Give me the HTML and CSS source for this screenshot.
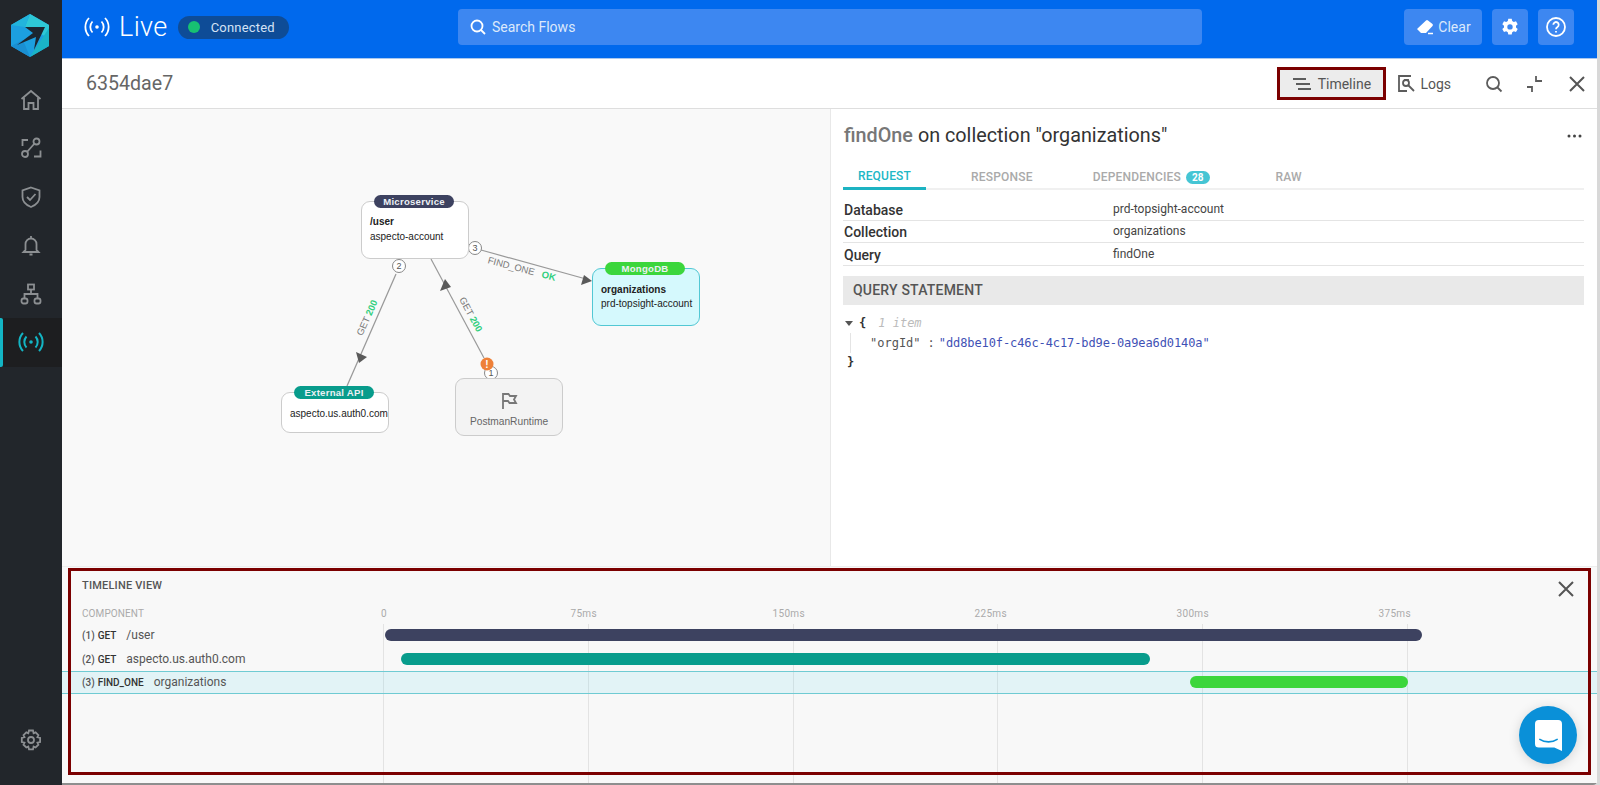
FILE: index.html
```html
<!DOCTYPE html>
<html lang="en">
<head>
<meta charset="utf-8">
<title>Live</title>
<link rel="stylesheet" href="styles.css">
</head>
<body>
<div class="app">
  <aside class="sidebar">
    <div class="logo">
      <svg width="40" height="44" viewBox="0 0 40 44">
        <polygon points="19,0 38,11 38,32 19,43 0,32 0,11" fill="#1c9fe0"/>
        <polygon points="19,0 38,11 38,24 14,13" fill="#2ec8d6"/>
        <polygon points="0,11 19,0 14,13" fill="#22b4dc"/>
        <polygon points="19,43 38,32 38,14 22,38" fill="#1ab4c6"/>
        <polygon points="0,32 12,26 19,43" fill="#1a8fd2"/>
        <polygon points="34,13 14,13 22,19 6,31 25,23 23,36" fill="#1c2630"/>
      </svg>
    </div>
    <nav class="nav">
      <a class="nav-item"><svg width="22" height="22" viewBox="0 0 22 22" class="ico"><path d="M1.500 10 11 2l9.500 8"/><path d="M4 8.500V20h4.500v-6h5v6H18V8.500"/></svg></a>
      <a class="nav-item"><svg width="22" height="22" viewBox="0 0 22 22" class="ico"><circle cx="16.500" cy="4.500" r="3"/><circle cx="5" cy="17" r="3"/><path d="M7 15 14.500 6.500"/><path d="M8 3H2.500v6M14 19.500h6.500v-6"/></svg></a>
      <a class="nav-item"><svg width="22" height="22" viewBox="0 0 22 22" class="ico"><path d="M11 1.500 19.500 4.500V11c0 5-3.500 8-8.500 10C6 19 2.500 16 2.500 11V4.500Z"/><path d="m7 11 3 3 5.500-6"/></svg></a>
      <a class="nav-item"><svg width="22" height="22" viewBox="0 0 22 22" class="ico"><path d="M11 2v2M5.500 16V10a5.500 5.500 0 0 1 11 0v6l2 2h-15ZM9.500 20.500h3"/></svg></a>
      <a class="nav-item"><svg width="22" height="22" viewBox="0 0 22 22" class="ico"><rect x="8" y="1.500" width="6" height="5"/><rect x="1.500" y="15.500" width="6" height="5" rx="2"/><rect x="14.500" y="15.500" width="6" height="5" rx="2"/><path d="M11 6.500V11M4.500 15.500V11h13v4.500"/></svg></a>
      <a class="nav-item active"><svg width="26" height="22" viewBox="0 0 26 22" class="ico-live"><circle cx="13" cy="11" r="1.800" class="dot"/><path d="M8.500 5.500a8 8 0 0 0 0 11M17.500 5.500a8 8 0 0 1 0 11"/><path d="M5 2a13 13 0 0 0 0 18M21 2a13 13 0 0 1 0 18"/></svg></a>
    </nav>
    <a class="nav-item nav-bottom"><svg width="22" height="22" viewBox="0 0 22 22" class="ico"><circle cx="11" cy="11" r="3"/><path d="M9 1.500h4l.6 2.800 2-.9 2.800 2.800-1 2 2.700.8v4l-2.700.7 1 2-2.800 2.800-2-1-.6 2.900H9l-.7-2.900-2 1-2.800-2.800 1-2-2.700-.7v-4l2.700-.8-1-2 2.800-2.800 2 .9Z"/></svg></a>
  </aside>

  <main class="main">
    <header class="topbar">
      <div class="brand">
        <svg width="26" height="22" viewBox="0 0 26 22" class="ico-white"><circle cx="13" cy="11" r="1.800" class="dot-white"/><path d="M8.500 5.500a8 8 0 0 0 0 11M17.500 5.500a8 8 0 0 1 0 11"/><path d="M5 2a13 13 0 0 0 0 18M21 2a13 13 0 0 1 0 18"/></svg>
        <span class="brand-title">Live</span>
        <span class="status"><i class="status-dot"></i>Connected</span>
      </div>
      <div class="search">
        <svg width="16" height="16" viewBox="0 0 16 16" class="ico-white"><circle cx="7" cy="7" r="5.500"/><path d="m11 11 4 4"/></svg>
        <span>Search Flows</span>
      </div>
      <div class="top-actions">
        <button class="top-btn top-btn-text">
          <svg width="20" height="20" viewBox="0 0 20 20"><path d="M2 12 11 3.500a1.500 1.500 0 0 1 2 0l4.500 3.500a1.500 1.500 0 0 1 0 2l-6.500 7H6Z" fill="#fff"/><path d="M13 16.500h5" stroke="#fff" stroke-width="1.500"/></svg>
          Clear
        </button>
        <button class="top-btn"><svg width="18" height="18" viewBox="0 0 18 18"><path fill="#fff" fill-rule="evenodd" d="M7.300.8h3.400l.5 2.200 1.600.9 2.200-.7 1.700 3-1.700 1.500v1.800l1.700 1.500-1.700 3-2.200-.7-1.600.9-.5 2.200H7.300l-.5-2.200-1.600-.9-2.200.7-1.700-3 1.700-1.500V7.700L1.300 6.200l1.700-3 2.200.7 1.600-.9ZM9 6.200a2.600 2.600 0 1 0 0 5.400 2.600 2.600 0 0 0 0-5.400Z"/></svg></button>
        <button class="top-btn"><svg width="20" height="20" viewBox="0 0 20 20" class="ico-white"><circle cx="10" cy="10" r="9"/><path d="M7.300 7.700a2.700 2.700 0 1 1 4.200 2.300c-1 .6-1.500 1.100-1.500 2.200"/><path d="M10 14v1.500"/></svg></button>
      </div>
    </header>

    <div class="subbar">
      <h1 class="flow-id">6354dae7</h1>
      <div class="sub-actions">
        <button class="view-btn selected">
          <svg width="18" height="12" viewBox="0 0 18 12" class="ico-dark"><path d="M0 1h13M3 6h14M5 11h13"/></svg>
          Timeline
        </button>
        <button class="view-btn">
          <svg width="17" height="17" viewBox="0 0 17 17" class="ico-dark"><path d="M13 1H1v15h8"/><path d="M6 5h5"/><circle cx="8" cy="8" r="3"/><path d="m10 10 6 6"/></svg>
          Logs
        </button>
        <svg width="18" height="18" viewBox="0 0 18 18" class="ico-dark icon-search"><circle cx="8" cy="8" r="6"/><path d="m12.500 12.500 4 4"/></svg>
        <svg width="18" height="18" viewBox="0 0 18 18" class="ico-dark icon-collapse"><path d="M10 1v5h6M1 12h5v5"/></svg>
        <svg width="16" height="16" viewBox="0 0 16 16" class="ico-close"><path d="m1 1 14 14M15 1 1 15"/></svg>
      </div>
    </div>

    <section class="detail">
      <div class="canvas">
        <svg class="edges" width="768" height="457" viewBox="62 109 768 457">
          <g class="edge">
            <path d="M396 274 347 386"/>
            <path d="M484 358 431 259"/>
            <path d="M481 250 586 279"/>
          </g>
          <g class="arrow">
            <polygon points="359,363 356,352 367,357"/>
            <polygon points="445,279 440,291 451,287"/>
            <polygon points="592,281 581,285 584,275"/>
          </g>
          <g class="edge-num">
            <circle cx="475" cy="248" r="6.500"/>
            <circle cx="399" cy="266" r="6.500"/>
            <circle cx="491" cy="373" r="6.500"/>
          </g>
          <g class="edge-num-text">
            <text x="475" y="251">3</text>
            <text x="399" y="269">2</text>
            <text x="491" y="376">1</text>
          </g>
          <circle cx="487" cy="364" r="6.500" class="warn"/>
          <text x="487" y="368" class="warn-text">!</text>
          <text class="edge-label" transform="translate(370 319) rotate(-66)">GET <tspan class="ok">200</tspan></text>
          <text class="edge-label" transform="translate(468 316) rotate(62)">GET <tspan class="ok">200</tspan></text>
          <text class="edge-label" transform="translate(521 272) rotate(15)">FIND_ONE <tspan class="ok" dx="5">OK</tspan></text>
        </svg>

        <div class="node node-micro">
          <span class="pill pill-micro">Microservice</span>
          <b>/user</b>
          <span>aspecto-account</span>
        </div>
        <div class="node node-mongo">
          <span class="pill pill-mongo">MongoDB</span>
          <b>organizations</b>
          <span>prd-topsight-account</span>
        </div>
        <div class="node node-ext">
          <span class="pill pill-ext">External API</span>
          <span>aspecto.us.auth0.com</span>
        </div>
        <div class="node node-postman">
          <svg width="18" height="18" viewBox="0 0 18 18" class="ico-flag"><path d="M3 17V2h5.500l1.500 2h6l-2 3.500 2 3.500H9.500L8 9H3"/></svg>
          <span>PostmanRuntime</span>
        </div>
      </div>

      <div class="panel">
        <div class="panel-head">
          <h2 class="panel-title"><span class="muted">findOne</span> on collection "organizations"</h2>
          <svg width="15" height="4" viewBox="0 0 15 4" class="more"><circle cx="2" cy="2" r="1.500"/><circle cx="7.500" cy="2" r="1.500"/><circle cx="13" cy="2" r="1.500"/></svg>
        </div>
        <div class="tabs">
          <span class="tab tab-active">REQUEST</span>
          <span class="tab tab-2">RESPONSE</span>
          <span class="tab tab-3">DEPENDENCIES <em class="badge">28</em></span>
          <span class="tab tab-4">RAW</span>
        </div>
        <div class="kv"><b>Database</b><span>prd-topsight-account</span></div>
        <div class="kv"><b>Collection</b><span>organizations</span></div>
        <div class="kv"><b>Query</b><span>findOne</span></div>
        <div class="section-bar">QUERY STATEMENT</div>
        <div class="json">
          <div class="json-line"><i class="caret"></i><b>{</b><span class="json-meta">1 item</span></div>
          <div class="json-line json-inner"><span class="json-key">"orgId"</span><span class="json-colon">:</span><span class="json-str">"dd8be10f-c46c-4c17-bd9e-0a9ea6d0140a"</span></div>
          <div class="json-line json-end"><b>}</b></div>
        </div>
      </div>
    </section>

    <section class="timeline">
      <div class="grid-lines"><i></i><i></i><i></i><i></i><i></i><i></i></div>
      <div class="tl-head">
        <span>TIMELINE VIEW</span>
        <svg width="16" height="16" viewBox="0 0 16 16" class="ico-close"><path d="m1 1 14 14M15 1 1 15"/></svg>
      </div>
      <div class="tl-axis">
        <span class="tl-comp">COMPONENT</span>
        <div class="ticks"><span class="tick-0">0</span><span>75ms</span><span class="tick-wide">150ms</span><span>225ms</span><span>300ms</span><span>375ms</span></div>
      </div>
      <div class="tl-row">
        <div class="tl-label"><b>(1)</b> <b class="verb">GET</b><span>/user</span></div>
        <div class="tl-track"><i class="bar bar-navy" style="margin-left:2px;width:1037px"></i></div>
      </div>
      <div class="tl-row">
        <div class="tl-label"><b>(2)</b> <b class="verb">GET</b><span>aspecto.us.auth0.com</span></div>
        <div class="tl-track"><i class="bar bar-teal" style="margin-left:18px;width:749px"></i></div>
      </div>
      <div class="tl-row tl-row-active">
        <div class="tl-label"><b>(3)</b> <b class="verb">FIND_ONE</b><span>organizations</span></div>
        <div class="tl-track"><i class="bar bar-green" style="margin-left:807px;width:218px"></i></div>
      </div>
    </section>
  </main>
</div>

<div class="mark mark-timeline"></div>
<button class="chat" aria-label="Chat">
  <svg width="28" height="32" viewBox="0 0 28 32"><path fill="#fff" d="M4 0h20a4 4 0 0 1 4 4v28l-8-3.500H4a4 4 0 0 1-4-4V4a4 4 0 0 1 4-4Z"/><path d="M5 20c5 3.500 13 3.500 18 0" fill="none" stroke="#0a90d8" stroke-width="1.600" stroke-linecap="round"/></svg>
</button>
</body>
</html>
```

FILE: styles.css
```css
* { box-sizing: border-box; }
html, body { margin: 0; height: 100%; overflow: hidden; }
body { font-family: Roboto, "Liberation Sans", sans-serif; color: #333; background: #d8d8d8; }
button { font-family: inherit; border: 0; padding: 0; cursor: pointer; }
h1, h2 { margin: 0; font-weight: 400; }

.app { display: flex; width: 1597px; height: 785px; }

/* sidebar */
.sidebar { width: 62px; flex: none; background: #22262b; display: flex; flex-direction: column; }
.logo { height: 75.500px; padding: 14px 0 0 11px; }
.nav { display: flex; flex-direction: column; flex: 1; }
.nav-item { height: 48.500px; display: flex; align-items: center; justify-content: center; position: relative; }
.nav-item.active { background: #1d1e20; }
.nav-item.active::before { content: ""; position: absolute; left: 0; top: 0; bottom: 0; width: 3px; background: #13b5c4; border-radius: 0 2px 2px 0; }
.nav-bottom { margin-bottom: 21px; }
.ico { fill: none; stroke: #8c8f92; stroke-width: 1.800; }
.ico-live { fill: none; stroke: #13b5c4; stroke-width: 2; }
.dot { fill: #13b5c4; stroke: none; }

/* top bar */
.main { flex: 1; min-width: 0; display: flex; flex-direction: column; background: #fff; border-bottom-right-radius: 4px; overflow: hidden; }
.topbar { height: 59px; flex: none; background: #0069ed; border-bottom: 1px solid #a9c8ef; display: flex; align-items: center; padding: 0 23px 4px 22px; position: relative; }
.brand { display: flex; align-items: center; color: #fff; width: 374px; flex: none; }
.ico-white { fill: none; stroke: #fff; stroke-width: 1.800; }
.dot-white { fill: #fff; stroke: none; }
.brand-title { font-size: 27px; font-weight: 300; margin: 0 10px 0 9px; letter-spacing: .4px; }
.status { display: flex; align-items: center; height: 23px; width: 111px; border-radius: 12px; background: #0e4c97; color: #d5e3f5; font-size: 13px; letter-spacing: .2px; padding-left: 10px; }
.status-dot { width: 12px; height: 12px; border-radius: 50%; background: #17c172; margin-right: 11px; }
.search { width: 744px; height: 36px; flex: none; border-radius: 4px; background: #3d87f1; color: #dce9fb; font-size: 14px; display: flex; align-items: center; gap: 6px; padding-left: 12px; }
.top-actions { margin-left: auto; display: flex; gap: 10px; }
.top-btn { width: 36px; height: 36px; border-radius: 4px; background: #3d87f1; color: #dce9fb; font-size: 14px; display: flex; align-items: center; justify-content: center; gap: 3px; }
.top-btn-text { width: 78px; }

/* sub bar */
.subbar { height: 50px; flex: none; background: #fff; border-bottom: 1px solid #dedede; display: flex; align-items: center; padding: 0 12px 0 24px; }
.flow-id { font-size: 19.600px; color: #666; }
.sub-actions { margin-left: auto; display: flex; align-items: center; }
.view-btn { height: 33px; background: none; color: #555; font-size: 14px; font-weight: 400; display: flex; align-items: center; gap: 5px; }
.view-btn.selected { width: 109px; background: #ececec; border: 3px solid #7b0000; justify-content: center; margin-right: 12px; gap: 7px; }
.ico-dark { fill: none; stroke: #5c5c5c; stroke-width: 1.800; }
.icon-search { margin-left: 34px; }
.icon-collapse { margin-left: 23px; }
.ico-close { fill: none; stroke: #555; stroke-width: 2; }
.subbar .ico-close { margin-left: 25px; }

/* detail */
.detail { height: 457px; flex: none; display: flex; }
.canvas { width: 769px; flex: none; position: relative; background: #f9f9f9; border-right: 1px solid #e8e8e8; }
.edges { position: absolute; left: 0; top: 0; }
.edge path { stroke: #999; stroke-width: 1.200; fill: none; }
.arrow polygon { fill: #5a5a5a; }
.edge-num circle { fill: #fff; stroke: #888; stroke-width: 1; }
.edge-num-text text { font: 9px "Liberation Sans", sans-serif; fill: #555; text-anchor: middle; }
.warn { fill: #ee8038; }
.warn-text { font: bold 10px "Liberation Sans", sans-serif; fill: #fff; text-anchor: middle; }
.edge-label { font: 9.500px "Liberation Sans", sans-serif; fill: #777; text-anchor: middle; }
.ok { fill: #2fcf7d; font-weight: 700; }

.node { position: absolute; width: 108px; border: 1px solid #ccc; border-radius: 9px; background: #fff; display: flex; flex-direction: column; font: 10px/14.500px "Liberation Sans", sans-serif; color: #222; padding: 13px 0 0 8px; white-space: nowrap; }
.node b { font-weight: 700; }
.node-micro { left: 299px; top: 92px; height: 58px; }
.node-mongo { left: 530px; top: 159px; height: 58px; background: #d5f9fd; border-color: #52c8d4; padding-top: 14px; line-height: 14px; }
.node-ext { left: 219px; top: 283px; height: 41px; padding-top: 14px; }
.node-postman { left: 393px; top: 269px; height: 58px; background: #f3f3f3; color: #666; padding: 13px 0 0; align-items: center; gap: 5px; font-size: 10.200px; }
.ico-flag { fill: none; stroke: #777; stroke-width: 1.800; }
.pill { position: absolute; left: 12px; top: -7px; width: 80px; height: 13px; border-radius: 7px; color: #ecf0f4; font: bold 9.600px/13px "Liberation Sans", sans-serif; text-align: center; letter-spacing: .25px; }
.pill-micro { background: #3d4260; }
.pill-mongo { background: #3cd63c; }
.pill-ext { background: #089c8c; }

/* side panel */
.panel { flex: 1; min-width: 0; background: #fff; padding: 0 13px 0 12px; }
.panel-head { height: 53px; display: flex; align-items: center; justify-content: space-between; padding: 0 2px 0 1px; }
.panel-title { font-size: 19.800px; color: #333; }
.muted { color: #777; font-weight: 500; }
.more { fill: #444; }
.tabs { display: flex; height: 28px; border-bottom: 2px solid #f0f0f0; position: relative; font-size: 12px; font-weight: 500; letter-spacing: .2px; color: #aaa; margin-bottom: 8px; }
.tab { display: flex; align-items: center; height: 28px; padding-top: 2px; white-space: nowrap; }
.tab-active { width: 83px; justify-content: center; color: #21b7c6; border-bottom: 3px solid #1cb3c2; padding-top: 3px; }
.tab-2 { margin-left: 45px; }
.tab-3 { margin-left: 60px; }
.tab-4 { margin-left: 66px; }
.badge { font-style: normal; font-size: 10px; font-weight: 700; color: #fff; background: #45c5d4; padding: 0 6px; border-radius: 7px; margin-left: 5px; line-height: 13px; letter-spacing: 0; }
.kv { display: grid; grid-template-columns: 269px 1fr; height: 22.500px; border-bottom: 1px solid #e4e4e4; align-items: center; font-size: 12px; color: #444; padding-left: 1px; }
.kv b { font-size: 14px; font-weight: 500; color: #333; padding-top: 2px; }
.section-bar { margin-top: 10px; height: 29px; background: #e9e9e9; color: #555; font-size: 14px; font-weight: 500; line-height: 29px; padding-left: 10px; letter-spacing: .2px; }
.json { padding: 9px 0 0 2px; font: 12px/20px "DejaVu Sans Mono", monospace; color: #333; }
.json-line { height: 19.500px; white-space: nowrap; display: flex; align-items: center; }
.caret { width: 0; height: 0; border: 4px solid transparent; border-top: 5px solid #555; border-bottom: 0; margin-right: 6px; }
.json-meta { color: #bbb; font-style: italic; margin-left: 12px; }
.json-inner { margin-left: 5px; padding-left: 19px; border-left: 1px solid #e4e4e4; }
.json-key { color: #555; }
.json-colon { margin: 0 4px 0 7px; color: #555; }
.json-str { color: #3f51b5; letter-spacing: -.1px; }
.json-end { padding-left: 2px; }

/* timeline */
.timeline { flex: 1; min-height: 0; background: #f8f8f8; position: relative; padding-top: 11px; border-bottom: 2px solid #8e8e8e; border-top: 1px solid #eee; }
.grid-lines { position: absolute; left: 321px; top: 57px; bottom: 0; display: flex; }
.grid-lines i { width: 204.800px; border-left: 1px solid #e3e3e3; }
.tl-head { display: flex; justify-content: space-between; padding: 0 23px 0 20px; height: 16px; font-size: 11px; font-weight: 500; color: #555; letter-spacing: .2px; line-height: 16px; position: relative; }
.tl-head .ico-close { margin-top: 3px; }
.tl-axis { display: flex; height: 29.500px; padding: 13px 0 0 20px; font-size: 10px; color: #aaa; line-height: 14px; position: relative; letter-spacing: .35px; }
.tl-comp { width: 299px; flex: none; letter-spacing: .1px; }
.ticks { display: flex; }
.ticks span { width: 202px; text-align: right; flex: none; }
.ticks .tick-0 { width: 13px; text-align: left; }
.ticks .tick-wide { width: 208px; }
.ticks span:nth-child(2) { width: 203px; }
.tl-row { display: flex; height: 23.500px; align-items: center; position: relative; }
.tl-row-active { background: rgba(100, 215, 235, .15); border-top: 1px solid #6fcbd3; border-bottom: 1px solid #6fcbd3; }
.tl-label { width: 321px; flex: none; padding-left: 20px; font-size: 12px; color: #555; display: flex; align-items: baseline; gap: 3px; }
.tl-label b { font-size: 10px; font-weight: 500; color: #555; }
.tl-label .verb { color: #333; margin-right: 7px; }
.tl-track { flex: 1; display: flex; }
.bar { display: block; height: 12px; border-radius: 6px; }
.bar-navy { background: #3d4260; }
.bar-teal { background: #089c8c; }
.bar-green { background: #3cd63c; }

/* overlays */
.mark { position: absolute; pointer-events: none; border: 3px solid #7b0000; }
.mark-timeline { left: 68px; top: 568px; width: 1523px; height: 207px; }
.chat { position: absolute; left: 1519px; top: 706px; width: 58px; height: 58px; border-radius: 50%; background: #0a90d8; box-shadow: 0 2px 12px rgba(0,0,0,.15); display: flex; align-items: center; justify-content: center; }
.chat svg { width: 27px; height: 31px; }
```
